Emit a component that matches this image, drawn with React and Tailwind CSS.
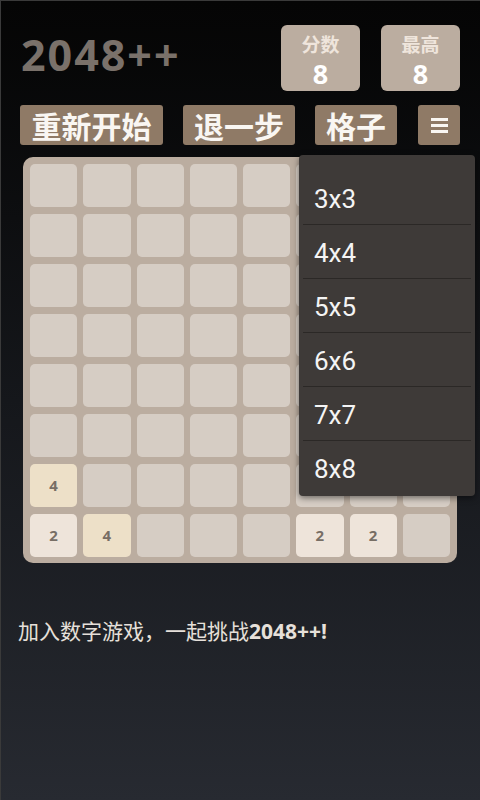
import React from "react";

const SANS = "font-['Open_Sans','Noto_Sans_CJK_SC',sans-serif]";
const CJK = "font-['Noto_Sans_CJK_SC','Noto_Sans',sans-serif]";

// 8x8 board, 0 = empty
const BOARD = [
  [0, 0, 0, 0, 0, 0, 0, 0],
  [0, 0, 0, 0, 0, 0, 0, 0],
  [0, 0, 0, 0, 0, 0, 0, 0],
  [0, 0, 0, 0, 0, 0, 0, 0],
  [0, 0, 0, 0, 0, 0, 0, 0],
  [0, 0, 0, 0, 0, 0, 0, 0],
  [4, 0, 0, 0, 0, 0, 0, 0],
  [2, 4, 0, 0, 0, 2, 2, 0],
];

const TILE_BG = {
  0: "bg-[#d6cdc4]",
  2: "bg-[#eee4da]",
  4: "bg-[#ede0c8]",
};

const SIZES = ["3x3", "4x4", "5x5", "6x6", "7x7", "8x8"];

function ScoreBox({ label, value }) {
  return (
    <div className="w-[79px] h-[66px] rounded-[6px] bg-[#bbada0] flex flex-col items-center">
      <div className={`${CJK} mt-[7px] text-[19px] leading-[24px] text-[#efe5dc] font-bold`}>{label}</div>
      <div className={`${SANS} mt-[3px] text-[27px] leading-[30px] font-bold text-white`}>{value}</div>
    </div>
  );
}

function ActionButton({ children, className = "" }) {
  return (
    <button
      className={`${CJK} h-[40px] rounded-[3px] bg-[#8f7a66] text-[#f9f6f2] font-bold text-[30px] leading-[40px] flex items-center justify-center ${className}`}
    >
      {children}
    </button>
  );
}

export default function App() {
  return (
    <div className="relative w-[480px] h-[800px] overflow-hidden border-t border-l border-[#3a3a3a] bg-gradient-to-b from-[#050505] via-[#15171b] to-[#272a31]">
      {/* header: title + scores */}
      <div className="flex items-start pt-[24px] pl-[20px] pr-[20px]">
        <div className={`${SANS} flex-1 mt-[6px] text-[43px] leading-[48px] font-bold tracking-[2px] text-[#7a716a]`}>
          2048++
        </div>
        <div className="flex gap-[21px]">
          <ScoreBox label="分数" value="8" />
          <ScoreBox label="最高" value="8" />
        </div>
      </div>

      {/* controls */}
      <div className="flex gap-[20px] pl-[19px] mt-[14px]">
        <ActionButton className="w-[143px]">重新开始</ActionButton>
        <ActionButton className="w-[112px]">退一步</ActionButton>
        <ActionButton className="w-[82px]">格子</ActionButton>
        <button className="w-[42px] h-[40px] ml-[1px] rounded-[3px] bg-[#8f7a66] flex flex-col items-center justify-center gap-[3px]">
          <span className="block w-[17px] h-[3px] bg-[#f9f6f2]" />
          <span className="block w-[17px] h-[3px] bg-[#f9f6f2]" />
          <span className="block w-[17px] h-[3px] bg-[#f9f6f2]" />
        </button>
      </div>

      {/* board */}
      <div className="ml-[22px] mt-[12px] w-[434px] h-[406px] rounded-[10px] bg-[#bbada0] pt-[7px] pb-[6px] px-[7px] grid grid-cols-8 grid-rows-8 gap-x-[6px] gap-y-[7px]">
        {BOARD.flat().map((v, i) => (
          <div
            key={i}
            className={`rounded-[5px] flex items-center justify-center ${TILE_BG[v]} ${SANS} font-bold text-[15px] text-[#776e65]`}
          >
            {v ? v : ""}
          </div>
        ))}
      </div>

      {/* footer message */}
      <div className={`${CJK} mt-[52px] ml-[17px] text-[21px] leading-[30px] text-[#e6e0da]`}>
        加入数字游戏，一起挑战<span className={`${SANS} font-bold`}>2048++!</span>
      </div>

      {/* grid-size menu (open) */}
      <div className="absolute left-[298px] top-[154px] w-[176px] h-[341px] rounded-[4px] bg-[#3e3a38] shadow-[0_2px_6px_rgba(0,0,0,0.5)] pt-[16px]">
        {SIZES.map((s, i) => (
          <div key={s}>
            <div className="h-[53px] flex items-center pl-[15px] pt-[3px] font-['Roboto',sans-serif] text-[26px] text-[#f4f4f4]">
              {s}
            </div>
            {i < SIZES.length - 1 && <div className="mx-[4px] h-px bg-[#2b2826]" />}
          </div>
        ))}
      </div>
    </div>
  );
}
